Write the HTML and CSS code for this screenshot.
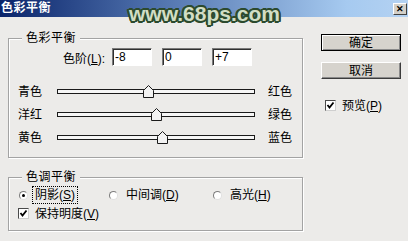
FILE: index.html
```html
<!DOCTYPE html>
<html lang="zh-CN">
<head>
    <meta charset="UTF-8">
    <meta name="viewport" content="width=device-width, initial-scale=1.0">
    <title>色彩平衡</title>
    <link rel="stylesheet" href="styles.css">
</head>
<body>
    <div class="dialog">
        <div class="titlebar">
            <span class="title">色彩平衡</span>
            <span class="close-btn">✕</span>
        </div>
        <div class="watermark">www.68ps.com</div>

        <div class="dialog-body">
            <div class="main-col">
                <div class="group group-balance">
                    <span class="group-title">色彩平衡</span>
                    <div class="levels-row">
                        <label class="levels-label">色阶(<u>L</u>):</label>
                        <input class="level-input" type="text" value="-8">
                        <input class="level-input" type="text" value="0">
                        <input class="level-input" type="text" value="+7">
                    </div>
                    <div class="slider-row">
                        <span class="slider-label">青色</span>
                        <div class="track">
                            <svg class="thumb" style="left: 46%" width="11" height="13" viewBox="0 0 11 13"><polygon points="0.5,5.5 5.5,0.5 10.5,5.5 10.5,12.5 0.5,12.5" fill="#f2f2f2" stroke="#1a1a1a"/></svg>
                        </div>
                        <span class="slider-label right">红色</span>
                    </div>
                    <div class="slider-row">
                        <span class="slider-label">洋红</span>
                        <div class="track">
                            <svg class="thumb" style="left: 50%" width="11" height="13" viewBox="0 0 11 13"><polygon points="0.5,5.5 5.5,0.5 10.5,5.5 10.5,12.5 0.5,12.5" fill="#f2f2f2" stroke="#1a1a1a"/></svg>
                        </div>
                        <span class="slider-label right">绿色</span>
                    </div>
                    <div class="slider-row">
                        <span class="slider-label">黄色</span>
                        <div class="track">
                            <svg class="thumb" style="left: 53.5%" width="11" height="13" viewBox="0 0 11 13"><polygon points="0.5,5.5 5.5,0.5 10.5,5.5 10.5,12.5 0.5,12.5" fill="#f2f2f2" stroke="#1a1a1a"/></svg>
                        </div>
                        <span class="slider-label right">蓝色</span>
                    </div>
                </div>

                <div class="group group-tone">
                    <span class="group-title">色调平衡</span>
                    <div class="radio-row">
                        <div class="option option-first">
                            <span class="radio checked"></span>
                            <span class="option-text focused">阴影(<u>S</u>)</span>
                        </div>
                        <div class="option option-mid">
                            <span class="radio"></span>
                            <span class="option-text">中间调(<u>D</u>)</span>
                        </div>
                        <div class="option">
                            <span class="radio"></span>
                            <span class="option-text">高光(<u>H</u>)</span>
                        </div>
                    </div>
                    <div class="check-row">
                        <span class="checkbox"><svg width="9" height="9" viewBox="0 0 9 9"><polyline points="1.5,4 3.5,6.5 7.5,1.5" fill="none" stroke="#000" stroke-width="1.8"/></svg></span>
                        <span class="option-text">保持明度(<u>V</u>)</span>
                    </div>
                </div>
            </div>

            <div class="side-col">
                <button class="btn btn-default">确定</button>
                <button class="btn">取消</button>
                <div class="check-row preview-row">
                    <span class="checkbox"><svg width="9" height="9" viewBox="0 0 9 9"><polyline points="1.5,4 3.5,6.5 7.5,1.5" fill="none" stroke="#000" stroke-width="1.8"/></svg></span>
                    <span class="option-text">预览(<u>P</u>)</span>
                </div>
            </div>
        </div>
    </div>
</body>
</html>
```

FILE: styles.css
```css
body {
    margin: 0;
    padding: 0;
    background-color: #ecebe9;
    font-family: "Liberation Sans", "Noto Sans CJK SC", sans-serif;
    font-size: 12px;
    color: #000;
}
.dialog {
    position: relative;
    width: 408px;
    height: 241px;
    overflow: hidden;
}
.titlebar {
    height: 17px;
    display: flex;
    align-items: center;
    justify-content: space-between;
    background: linear-gradient(to right, #0a246a 0%, #4a6ca8 35%, #a6caf0 85%, #b4d2f2 100%);
}
.titlebar .title {
    color: #fff;
    font-weight: bold;
    font-size: 12px;
    letter-spacing: 0.5px;
    line-height: 17px;
    padding-left: 1px;
}
.close-btn {
    width: 14px;
    height: 12px;
    margin-right: 1px;
    box-sizing: border-box;
    background-color: #d4d0c8;
    border: 1px solid;
    border-color: #fff #404040 #404040 #fff;
    font-size: 9px;
    font-weight: bold;
    line-height: 10px;
    text-align: center;
}
.watermark {
    position: absolute;
    top: 4px;
    left: 129px;
    font-family: "Liberation Sans", sans-serif;
    font-size: 21px;
    font-weight: bold;
    line-height: 20px;
    color: #d2dec4;
    text-shadow:
        -2px 0 0 #2c4a2e, 2px 0 0 #2c4a2e, 0 -2px 0 #2c4a2e, 0 2px 0 #2c4a2e,
        -1px -1px 0 #2c4a2e, 1px -1px 0 #2c4a2e, -1px 1px 0 #2c4a2e, 1px 1px 0 #2c4a2e,
        -2px -1px 0 #2c4a2e, 2px 1px 0 #2c4a2e, -1px 2px 0 #2c4a2e, 1px -2px 0 #2c4a2e;
}
.dialog-body {
    display: flex;
}
.main-col {
    width: 295px;
    padding-left: 8px;
}

/* group boxes */
.group {
    position: relative;
    border: 1px solid #a3a3a3;
    box-shadow: 1px 1px 0 #fff, inset 1px 1px 0 #fff;
    box-sizing: border-box;
}
.group-title {
    position: absolute;
    top: -9px;
    left: 13px;
    padding: 0 4px;
    background-color: #ecebe9;
    line-height: 16px;
    letter-spacing: 0.5px;
}
.group-balance {
    margin-top: 21px;
    height: 120px;
}
.group-tone {
    margin-top: 19px;
    height: 54px;
    padding: 8px 0 0 10px;
}

/* levels */
.levels-row {
    display: flex;
    align-items: center;
    margin-top: 9px;
    height: 18px;
}
.levels-label {
    width: 96px;
    text-align: right;
    margin-right: 7px;
}
.level-input {
    width: 40px;
    height: 18px;
    box-sizing: border-box;
    margin: 0 10px 0 0;
    padding: 0 2px;
    font-family: "Liberation Sans", sans-serif;
    font-size: 12px;
    background-color: #fff;
    border: 1px solid;
    border-color: #7a7a7a #fff #fff #7a7a7a;
    box-shadow: inset 1px 1px 0 #303030;
    outline: none;
}

/* sliders */
.slider-row {
    display: flex;
    align-items: center;
    height: 23px;
    padding-left: 9px;
}
.levels-row + .slider-row {
    margin-top: 14px;
}
.slider-label {
    width: 24px;
    line-height: 16px;
}
.slider-label.right {
    margin-left: 13px;
}
.track {
    position: relative;
    width: 198px;
    height: 5px;
    margin-left: 15px;
    box-sizing: border-box;
    border: 1px solid #1a1a1a;
    background-color: #f6f6f6;
}
.thumb {
    position: absolute;
    top: -5px;
    margin-left: -5.5px;
    display: block;
}

/* radio + checkbox */
.radio-row {
    display: flex;
    align-items: center;
    height: 18px;
}
.option {
    display: flex;
    align-items: center;
}
.option-first {
    width: 90px;
}
.option-mid {
    width: 104px;
}
.radio {
    position: relative;
    width: 9px;
    height: 9px;
    box-sizing: border-box;
    border-radius: 50%;
    background-color: #fff;
    border: 1px solid;
    border-color: #7c7c7c #e0e0e0 #e0e0e0 #7c7c7c;
    margin-right: 5px;
}
.radio.checked::after {
    content: "";
    position: absolute;
    left: 2px;
    top: 2px;
    width: 3px;
    height: 3px;
    border-radius: 50%;
    background-color: #000;
}
.option-text {
    padding: 0 2px;
    line-height: 16px;
}
.option-text.focused {
    outline: 1px dotted #000;
}
.option + .option .radio,
.option-mid .radio {
    margin-right: 6px;
}
.check-row {
    display: flex;
    align-items: center;
    height: 19px;
    margin-left: -1px;
}
.checkbox {
    width: 11px;
    height: 11px;
    box-sizing: border-box;
    display: flex;
    align-items: center;
    justify-content: center;
    background-color: #fff;
    border: 1px solid;
    border-color: #4a4a4a #cfcfcf #cfcfcf #4a4a4a;
    margin-right: 4px;
}

/* buttons */
.side-col {
    display: flex;
    flex-direction: column;
    margin-left: 18px;
    padding-top: 17px;
}
.btn {
    width: 80px;
    height: 17px;
    margin: 0 0 11px 0;
    padding: 0;
    box-sizing: border-box;
    font-family: "Liberation Sans", "Noto Sans CJK SC", sans-serif;
    font-size: 12px;
    line-height: 14px;
    color: #000;
    background-color: #d6d3cd;
    border: 1px solid;
    border-color: #fff #3c3c3c #3c3c3c #fff;
    box-shadow: inset -1px -1px 0 #8a8a8a;
}
.btn-default {
    border-color: #000;
    box-shadow: inset 1px 1px 0 #fff, inset -1px -1px 0 #8a8a8a;
}
.preview-row {
    margin-top: 6px;
    margin-left: 4px;
}
```
